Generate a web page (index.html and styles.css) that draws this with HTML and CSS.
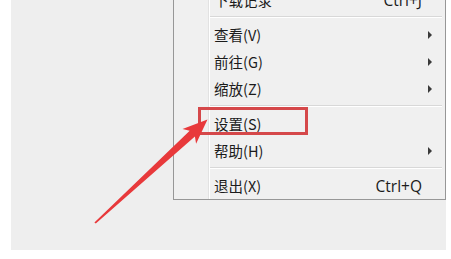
FILE: index.html
```
<!DOCTYPE html>
<html>
<head>
<meta charset="utf-8">
<link rel="stylesheet" href="styles.css">
</head>
<body>
<div class="desk">
  <div class="menu">
    <div class="item"><span class="label">下载记录</span><span class="key">Ctrl+J</span></div>
    <div class="sep"></div>
    <div class="item"><span class="label">查看(V)</span><span class="sub"></span></div>
    <div class="item"><span class="label">前往(G)</span><span class="sub"></span></div>
    <div class="item"><span class="label">缩放(Z)</span><span class="sub"></span></div>
    <div class="sep"></div>
    <div class="item"><span class="label">设置(S)</span></div>
    <div class="item"><span class="label">帮助(H)</span><span class="sub"></span></div>
    <div class="sep"></div>
    <div class="item"><span class="label">退出(X)</span><span class="key">Ctrl+Q</span></div>
  </div>
  <div class="highlight"></div>
  <svg class="pointer" width="435" height="250" viewBox="0 0 435 250">
    <polygon points="196.5,119.5 185.1,143.7 183.9,136.4 84.8,223.6 83.4,222.4 178.7,130.8 171.5,128.9" fill="#e8393b"/>
  </svg>
</div>
</body>
</html>
```
FILE: styles.css
```
html, body { margin: 0; padding: 0; background: #ffffff; }
body { width: 451px; height: 259px; overflow: hidden; }
.desk {
  position: relative;
  margin-left: 11px;
  width: 435px;
  height: 250px;
  background: #eeeeee;
  overflow: hidden;
}
.menu {
  position: absolute;
  left: 162px;
  top: -14px;
  width: 271px;
  background: #f0f0f0;
  border: 1px solid #979797;
  border-top: none;
  font-family: "Noto Sans CJK SC", "Liberation Sans", sans-serif;
  font-size: 14.5px;
  color: #1b1b1b;
  box-sizing: content-box;
}
.menu::before {
  content: "";
  position: absolute;
  left: 34px;
  top: 0;
  bottom: 0;
  width: 1px;
  background: #e2e2e2;
  border-right: 1px solid #ffffff;
}
.item {
  position: relative;
  height: 27px;
  display: flex;
  align-items: center;
  padding-left: 40px;
  padding-right: 23px;
}
.label { flex: 1; }
.key { font-family: "Open Sans", "Liberation Sans", sans-serif; font-size: 15.5px; }
.sub {
  width: 0; height: 0;
  border-top: 4px solid transparent;
  border-bottom: 4px solid transparent;
  border-left: 4px solid #3a3a3a;
  margin-right: -10px;
}
.sep {
  position: relative;
  height: 8px;
}
.sep::after {
  content: "";
  position: absolute;
  left: 36px;
  right: 3px;
  top: 3px;
  height: 1px;
  background: #d8d8d8;
  border-bottom: 1px solid #ffffff;
}
.highlight {
  position: absolute;
  left: 187px;
  top: 107px;
  width: 104px;
  height: 22px;
  border: 3px solid #d5484a;
}
.pointer { position: absolute; left: 0; top: 0; }
```
